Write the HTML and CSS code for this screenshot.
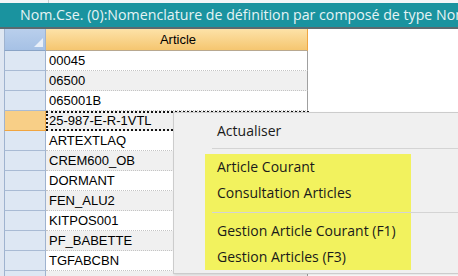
FILE: index.html
```html
<!DOCTYPE html>
<html lang="fr">
<head>
  <meta charset="UTF-8">
  <title>Nomenclature</title>
  <link rel="stylesheet" href="styles.css">
</head>
<body>

  <div class="backdrop"></div>

  <div class="titlebar">Nom.Cse. (0):Nomenclature de définition par composé de type Nomenclature</div>

  <div class="grid">
    <div class="row head">
      <div class="rh corner"></div>
      <div class="cell">Article</div>
    </div>
    <div class="row"><div class="rh"></div><div class="cell">00045</div></div>
    <div class="row alt"><div class="rh"></div><div class="cell">06500</div></div>
    <div class="row"><div class="rh"></div><div class="cell">065001B</div></div>
    <div class="row alt current"><div class="rh"></div><div class="cell">25-987-E-R-1VTL</div></div>
    <div class="row"><div class="rh"></div><div class="cell">ARTEXTLAQ</div></div>
    <div class="row alt"><div class="rh"></div><div class="cell">CREM600_OB</div></div>
    <div class="row"><div class="rh"></div><div class="cell">DORMANT</div></div>
    <div class="row alt"><div class="rh"></div><div class="cell">FEN_ALU2</div></div>
    <div class="row"><div class="rh"></div><div class="cell">KITPOS001</div></div>
    <div class="row alt"><div class="rh"></div><div class="cell">PF_BABETTE</div></div>
    <div class="row"><div class="rh"></div><div class="cell">TGFABCBN</div></div>
    <div class="row alt"><div class="rh"></div><div class="cell">VERALU</div></div>
  </div>

  <div class="menu">
    <div class="item">Actualiser</div>
    <div class="sep"></div>
    <div class="group">
      <div class="item">Article Courant</div>
      <div class="item">Consultation Articles</div>
      <div class="sep"></div>
      <div class="item">Gestion Article Courant (F1)</div>
      <div class="item">Gestion Articles (F3)</div>
    </div>
  </div>

</body>
</html>
```

FILE: styles.css
```css
html, body {
  margin: 0;
  height: 100%;
  overflow: hidden;
}

body {
  background: #ffffff;
  font-family: "Liberation Sans", Arial, sans-serif;
  font-size: 13px;
  color: #000;
}

.backdrop {
  height: 3px;
  background: #f3f5f7;
  border-left: 48px solid #f3f5f7;
  box-shadow: inset 49px 0 0 -48px #c8ccd0;
}

.titlebar {
  height: 24px;
  line-height: 23px;
  padding-left: 20px;
  background: #1a939f;
  color: #e6f4f5;
  font-family: "Open Sans", sans-serif;
  font-size: 14.2px;
  white-space: nowrap;
  overflow: hidden;
  border-bottom: 2px solid #5b6a70;
}

.grid {
  border-left: 4px solid #dfe7f2;
}

.row {
  display: flex;
  height: 20px;
  line-height: 20px;
}

.rh {
  width: 40px;
  flex: none;
  background: #dde7f3;
  border-left: 1px solid #9fb3cf;
  border-right: 1px solid #9fb3cf;
  border-bottom: 1px solid #a9bbd4;
}

.cell {
  width: 258px;
  padding-left: 3px;
  background: #ffffff;
  border-right: 1px solid #a0a0a0;
  border-bottom: 1px dotted #c4c4c4;
  white-space: nowrap;
}

.row.alt .cell {
  background: #f0f0f0;
}

.row.head {
  height: 22px;
  line-height: 21px;
}

.row.head .rh {
  position: relative;
  background: linear-gradient(#b9cfec, #a6c1e5);
  border-bottom: 1px solid #8aa4c6;
}

.corner::after {
  content: "";
  position: absolute;
  right: 2px;
  bottom: 3px;
  border-left: 9px solid transparent;
  border-bottom: 9px solid #e9f0fa;
}

.row.head .cell {
  text-align: center;
  background: linear-gradient(#fde2a8, #f5c670);
  border-right: 1px solid #f0a540;
  border-bottom: 1px solid #b8a890;
}

.row.current .rh {
  background: #f8cf87;
  border-right-color: #f0a540;
  border-bottom-color: #f0a540;
}

.row.current .cell {
  line-height: 16px;
  border: 2px dotted #151515;
  padding-left: 1px;
  width: 258px;
}

.menu {
  position: absolute;
  left: 173px;
  top: 112px;
  width: 320px;
  height: 162px;
  padding-top: 5px;
  box-sizing: border-box;
  background: #f0f0f0;
  border: 1px solid #cccccc;
  box-shadow: 1px 1px 2px rgba(0, 0, 0, 0.12);
  font-family: "Open Sans", sans-serif;
  font-size: 14px;
  color: #1a1a1a;
}

.item {
  height: 26px;
  line-height: 26px;
  padding-left: 43px;
  white-space: nowrap;
}

.sep {
  height: 1px;
  margin: 4px 0 5px 38px;
  background: #d4d4d4;
}

.group {
  background: linear-gradient(to right, transparent 31px, #f2f25e 31px, #f2f25e 237px, transparent 237px);
}

.group .item:nth-child(2) {
  height: 27px;
}

.group .sep {
  margin: 5px 0 5px 38px;
}
```
